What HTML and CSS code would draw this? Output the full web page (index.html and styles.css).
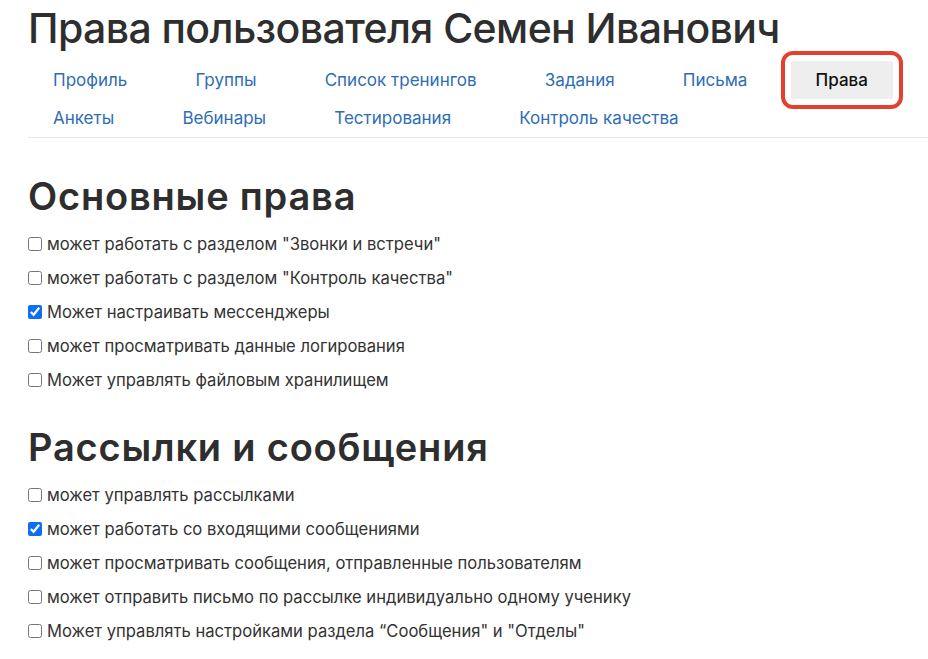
FILE: index.html
```html
<!DOCTYPE html>
<html lang="ru">
<head>
<meta charset="utf-8">
<title>Права пользователя</title>
<link rel="stylesheet" href="styles.css">
</head>
<body>
<div class="page">
  <h1 class="title">Права пользователя Семен Иванович</h1>
  <ul class="tabs">
    <li><a href="#">Профиль</a></li>
    <li><a href="#">Группы</a></li>
    <li><a href="#">Список тренингов</a></li>
    <li><a href="#">Задания</a></li>
    <li><a href="#">Письма</a></li>
    <li><a href="#" class="active">Права</a></li>
    <li><a href="#">Анкеты</a></li>
    <li><a href="#">Вебинары</a></li>
    <li><a href="#">Тестирования</a></li>
    <li><a href="#">Контроль качества</a></li>
  </ul>

  <h2 class="section first">Основные права</h2>
  <div class="perm"><input type="checkbox"><span>может работать с разделом "Звонки и встречи"</span></div>
  <div class="perm"><input type="checkbox"><span>может работать с разделом "Контроль качества"</span></div>
  <div class="perm"><input type="checkbox" checked><span>Может настраивать мессенджеры</span></div>
  <div class="perm"><input type="checkbox"><span>может просматривать данные логирования</span></div>
  <div class="perm"><input type="checkbox"><span>Может управлять файловым хранилищем</span></div>

  <h2 class="section">Рассылки и сообщения</h2>
  <div class="perm"><input type="checkbox"><span>может управлять рассылками</span></div>
  <div class="perm"><input type="checkbox" checked><span>может работать со входящими сообщениями</span></div>
  <div class="perm"><input type="checkbox"><span>может просматривать сообщения, отправленные пользователям</span></div>
  <div class="perm"><input type="checkbox"><span>может отправить письмо по рассылке индивидуально одному ученику</span></div>
  <div class="perm"><input type="checkbox"><span>Может управлять настройками раздела “Сообщения" и "Отделы"</span></div>
</div>
</body>
</html>
```

FILE: styles.css
```css
html, body {
  margin: 0;
  padding: 0;
  background: #ffffff;
}
body {
  font-family: Inter, "Noto Sans", sans-serif;
  color: #333333;
}
.page {
  padding-left: 28px;
}
.title {
  margin: 0;
  padding-top: 4px;
  height: 57px;
  font-size: 41px;
  font-weight: 500;
  line-height: 48px;
  letter-spacing: -0.6px;
  color: #2e2e2e;
  white-space: nowrap;
}
.tabs {
  list-style: none;
  margin: 0;
  padding: 0;
  display: flex;
  flex-wrap: wrap;
  border-bottom: 1px solid #e8e8e8;
}
.tabs li {
  margin-right: 18.2px;
}
.tabs a {
  display: block;
  padding: 0 25px;
  height: 38px;
  line-height: 38px;
  font-size: 17px;
  color: #2e6db4;
  text-decoration: none;
}
.tabs a.active {
  background: #eeeeee;
  color: #111111;
  font-weight: 500;
  outline: 4px solid #e2412f;
  outline-offset: 6px;
  border-radius: 2px;
}
.section {
  margin: 28px 0 9px;
  font-size: 38px;
  font-weight: 600;
  line-height: 44px;
  letter-spacing: 0.8px;
  color: #2e2e2e;
}
.section.first {
  margin-top: 36px;
}
.perm {
  display: flex;
  align-items: center;
  height: 34px;
  font-size: 16.6px;
  color: #333333;
  white-space: nowrap;
}
.perm input {
  width: 14px;
  height: 14px;
  margin: 0 5px 0 0;
  accent-color: #0b6ff5;
}
```
